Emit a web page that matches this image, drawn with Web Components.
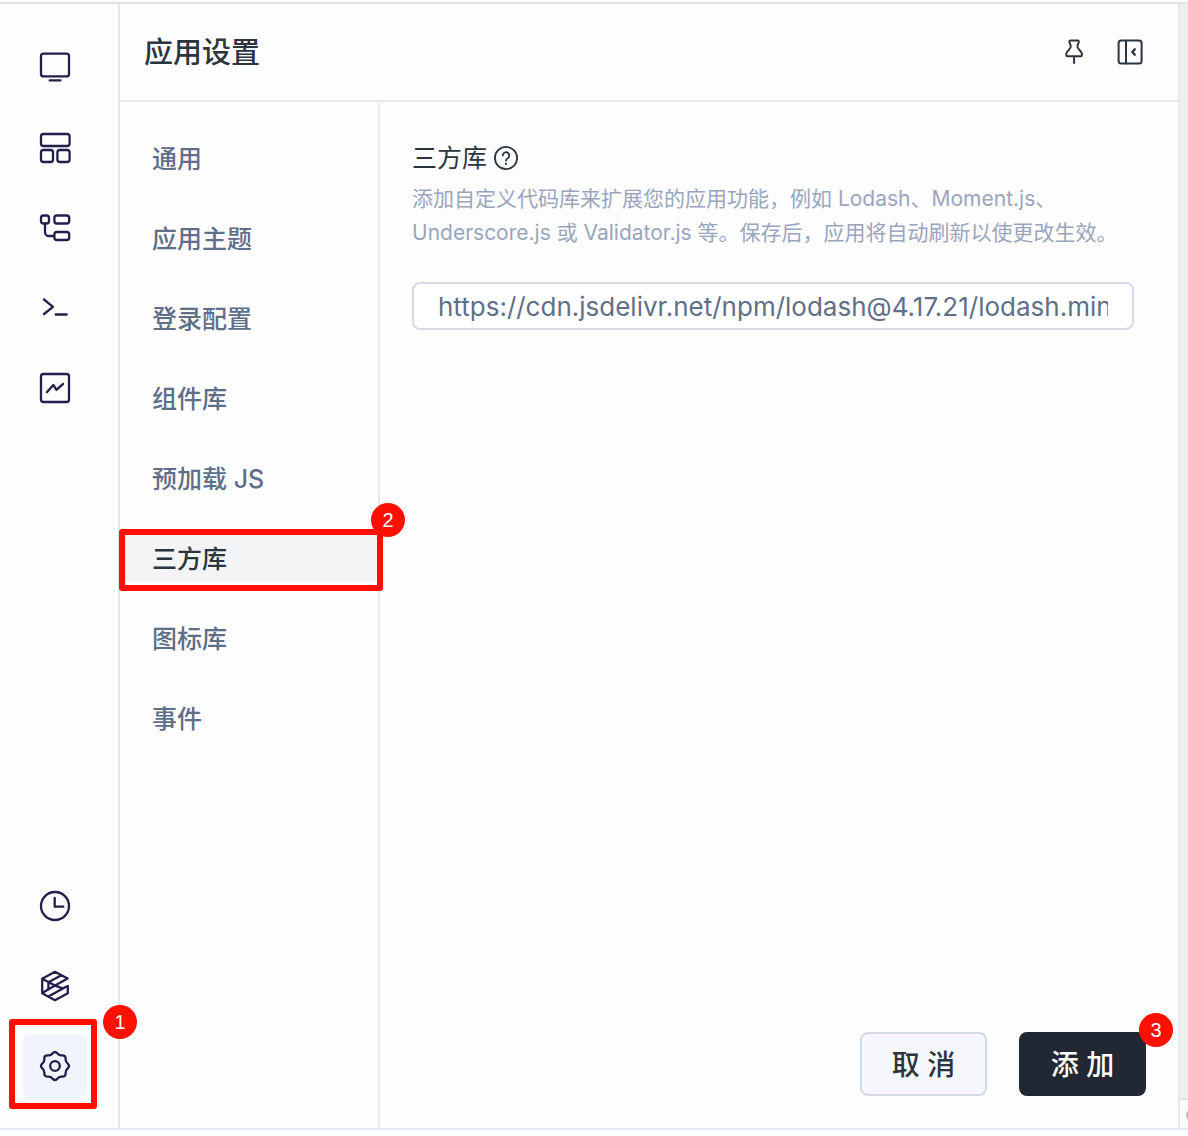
<!DOCTYPE html>
<html lang="zh-CN">
<head>
<meta charset="utf-8">
<title>应用设置</title>
<style>
  body {
    margin: 0;
    background: #fdfdfe;
    color: #2c3440;
    font-family: Inter, "Noto Sans CJK SC", sans-serif;
  }
</style>
</head>
<body>
<app-shell>
  <side-rail slot="rail">
    <rail-button icon="monitor" label="预览"></rail-button>
    <rail-button icon="layout" label="布局"></rail-button>
    <rail-button icon="tree" label="组件树"></rail-button>
    <rail-button icon="terminal" label="控制台"></rail-button>
    <rail-button icon="chart" label="性能"></rail-button>
    <rail-button slot="end" icon="clock" label="历史"></rail-button>
    <rail-button slot="end" icon="cube" label="模块"></rail-button>
    <rail-button slot="end" icon="gear" label="设置" active>
      <step-frame></step-frame>
      <step-badge>1</step-badge>
    </rail-button>
  </side-rail>
  <settings-panel heading="应用设置">
    <settings-menu slot="menu">
      <menu-item>通用</menu-item>
      <menu-item>应用主题</menu-item>
      <menu-item>登录配置</menu-item>
      <menu-item>组件库</menu-item>
      <menu-item>预加载 JS</menu-item>
      <menu-item active>三方库<step-frame slot="mark"></step-frame><step-badge slot="mark">2</step-badge></menu-item>
      <menu-item>图标库</menu-item>
      <menu-item>事件</menu-item>
    </settings-menu>
    <library-form label="三方库" value="https://cdn.jsdelivr.net/npm/lodash@4.17.21/lodash.min.js">
      添加自定义代码库来扩展您的应用功能，例如 Lodash、Moment.js、Underscore.js 或 Validator.js 等。保存后，应用将自动刷新以使更改生效。
      <action-button slot="actions">取 消</action-button>
      <action-button slot="actions" primary>添 加<step-badge slot="mark">3</step-badge></action-button>
    </library-form>
  </settings-panel>
</app-shell>

<script>
// Stroke icons, all on a 32px grid
const ICONS = {
  monitor: `<rect x="2" y="1.6" width="28" height="22.8" rx="2.5"/><path d="M10.7 28.4h10.8"/>`,
  layout: `<rect x="2" y="2" width="28.6" height="12" rx="2.5"/><rect x="2" y="18" width="12" height="12" rx="2.5"/><rect x="18.4" y="18" width="12.2" height="12" rx="2.5"/>`,
  tree: `<rect x="2" y="3.5" width="8" height="8" rx="2.5"/><rect x="15.4" y="3.5" width="14.8" height="8" rx="2.5"/><rect x="15.4" y="20" width="14.8" height="8" rx="2.5"/><path d="M6 11.5v8.5a4 4 0 0 0 4 4h5"/>`,
  terminal: `<path d="M5 7.5l9 7.3L5 22M16.7 22.5h11"/>`,
  chart: `<rect x="2" y="2" width="28" height="28" rx="2.5"/><path d="M7.9 20.2l6.4-7.2 3.2 4.9 6.6-6"/>`,
  clock: `<circle cx="16" cy="16" r="14"/><path d="M15.7 8v8.7h8.6"/>`,
  cube: `<path d="M28.6 8.4L16 1.8 3.2 8.8v14.4L16 30.2l12.8-7V16L24 18.4 9.4 26.6M28.6 8.4L16 15.4 3.2 8.8M22.4 5.2L9.4 12.2v7.4L16 15.4M3.2 23L16 15.6l7.6 2.8"/>`,
  gear: `<path d="M18.2 3.1Q20 5.7 23 5.3 26.7 5 26.7 9 26.3 12 28.9 13.8 31.1 16 28.9 18.2 26.3 20 26.7 23 26.7 27 23 26.7 20 26.3 18.2 28.9 16 31.1 13.8 28.9 12 26.3 9 26.7 5 26.7 5.3 23 5.7 20 3.1 18.2.9 16 3.1 13.8 5.7 12 5.3 9 5 5 9 5.3 12 5.7 13.8 3.1 16 .9 18.2 3.1z"/><circle cx="16" cy="16" r="4.8"/>`,
  pin: `<path d="M12.7 4.6h6.8q1.6 0 1.3 1.4l-1.2 3.4q-.4 1.4.4 2.6l3.2 4.2q.8 1.2.8 2.6 0 1.5-1.4 1.5H9.6q-1.4 0-1.4-1.5 0-1.4.8-2.6l3.2-4.2q.8-1.2.4-2.6L11.4 6q-.3-1.4 1.3-1.4zM16.1 20.5V27"/>`,
  collapse: `<rect x="4.6" y="4.6" width="23" height="23" rx="2.5"/><path d="M12 5v22.5"/><path d="M20.8 13.3L18.3 16l2.5 2.7" stroke-width="2.4"/>`,
  help: `<circle cx="16" cy="16" r="14.8"/><path d="M11.7 12.6a4.3 4.3 0 1 1 6.5 3.7Q16 17.5 16 19.6"/><path d="M16 23.6v.4" stroke-width="2.8"/>`,
};

function define(name, css, html, setup) {
  customElements.define(name, class extends HTMLElement {
    constructor() {
      super();
      this.attachShadow({ mode: "open" });
    }
    connectedCallback() {
      this.shadowRoot.innerHTML = `<style>${css}</style>${typeof html === "function" ? html(this) : html}`;
      if (setup) setup(this);
    }
  });
}

define("ui-icon", `
  :host { display: block; width: 32px; height: 32px; }
  svg { display: block; width: 100%; height: 100%; fill: none; stroke: currentColor; stroke-width: var(--icon-stroke, 2); stroke-linecap: round; stroke-linejoin: round; }
`, el => `<svg viewBox="0 0 32 32" aria-hidden="true">${ICONS[el.getAttribute("name")]}</svg>`);

// Red outline and number that sit on top of a control
define("step-frame", `
  :host { position: absolute; inset: var(--frame-inset); border: 6px solid #ff1000; border-radius: 3px; pointer-events: none; }
`, ``);

define("step-badge", `
  :host {
    position: absolute; top: var(--badge-top); right: var(--badge-right);
    display: grid; place-items: center; width: 34px; height: 34px; border-radius: 50%;
    background: #ff1000; color: #fff; font: 400 20px/34px "Liberation Sans", sans-serif; pointer-events: none;
  }
`, `<slot></slot>`);

define("app-shell", `
  :host { display: flex; flex-direction: column; box-sizing: border-box; min-height: 100vh; padding: 2px 0 6px; }
  main { flex: 1; display: grid; grid-template-columns: auto minmax(0, 1fr) 8px; border-top: 2px solid #e2e2e3; border-bottom: 2px solid #e4e8f0; }
  aside { display: flex; flex-direction: column; background: #eeeeee; }
  .corner { box-sizing: border-box; height: 30px; margin-top: auto; border-top: 2px solid #e3e3e3; background: #fafafa; overflow: hidden; padding: 9px 0 0 6px; }
  .corner::before { content: ""; display: block; width: 12px; height: 12px; border-radius: 50%; background: #b9b9b9; }
`, `<main><slot name="rail"></slot><slot></slot><aside><div class="corner"></div></aside></main>`);

define("side-rail", `
  :host { display: block; border-right: 2px solid #e4e6ec; color: #231f4b; --icon-stroke: 2.3; }
  nav { box-sizing: border-box; height: 100%; display: flex; flex-direction: column; justify-content: space-between; padding: 32px 31px 30px 23px; }
  div { display: grid; gap: 16px; }
`, `<nav><div><slot></slot></div><div><slot name="end"></slot></div></nav>`);

define("rail-button", `
  :host { display: block; position: relative; --frame-inset: -15px -10px -11px -14px; --badge-top: -29px; --badge-right: -50px; }
  button { display: grid; place-items: center; width: 64px; height: 64px; padding: 0; border: 0; border-radius: 8px; background: none; color: inherit; cursor: pointer; }
  :host([active]) button { background: #f1f4fd; }
`, el => `<button type="button" aria-label="${el.getAttribute("label")}"><ui-icon name="${el.getAttribute("icon")}"></ui-icon></button><slot></slot>`);

define("settings-panel", `
  :host { display: flex; flex-direction: column; border-right: 2px solid #e4e8f2; }
  header { display: flex; align-items: center; gap: 24px; height: 96px; padding: 0 32px 0 24px; border-bottom: 2px solid #e4e8f2; }
  h1 { flex: 1; margin: 0; padding-top: 2px; font-size: 29px; line-height: 40px; font-weight: 500; }
  header button { padding: 0; border: 0; background: none; color: inherit; cursor: pointer; }
  .body { flex: 1; display: grid; grid-template-columns: 260px minmax(0, 1fr); }
`, el => `
  <header>
    <h1>${el.getAttribute("heading")}</h1>
    <button type="button" aria-label="固定"><ui-icon name="pin"></ui-icon></button>
    <button type="button" aria-label="收起"><ui-icon name="collapse"></ui-icon></button>
  </header>
  <div class="body"><slot name="menu"></slot><slot></slot></div>
`);

define("settings-menu", `
  :host { display: block; border-right: 2px solid #e4e8f2; }
  nav { display: grid; gap: 32px; padding: 32px 0; }
`, `<nav><slot></slot></nav>`);

define("menu-item", `
  :host { display: block; position: relative; --frame-inset: -5px -5px -9px -1px; --badge-top: -31px; --badge-right: -27px; }
  button { box-sizing: border-box; display: block; width: 100%; height: 48px; padding: 2px 32px 0; border: 0; background: none; color: #5f6e89; font: inherit; font-size: 25px; line-height: 46px; font-weight: 500; text-align: left; cursor: pointer; }
  :host([active]) button { background: #f3f4f6; color: #2c3440; }
`, `<button type="button"><slot></slot></button><slot name="mark"></slot>`);

define("library-form", `
  :host { display: block; }
  form { box-sizing: border-box; height: 100%; display: flex; flex-direction: column; padding: 32px; }
  .field { padding-right: 12px; }
  .label { display: flex; align-items: center; gap: 7px; height: 48px; }
  label { font-size: 25px; line-height: 48px; }
  ui-icon { width: 24px; height: 24px; --icon-stroke: 2.4; }
  p { margin: 0 0 32px; color: #9aa5bd; font-size: 21px; line-height: 34px; }
  input { box-sizing: border-box; display: block; width: 100%; height: 48px; padding: 0 24px; border: 2px solid #d5d9e8; border-radius: 8px; background: #fff; color: #5f6e89; font: inherit; font-size: 26px; outline: 0; }
  footer { display: flex; justify-content: flex-end; gap: 32px; margin-top: auto; }
`, el => `
  <form>
    <div class="field">
      <div class="label"><label for="url">${el.getAttribute("label")}</label><ui-icon name="help"></ui-icon></div>
      <p><slot></slot></p>
      <input id="url" type="text" value="${el.getAttribute("value")}">
    </div>
    <footer><slot name="actions"></slot></footer>
  </form>
`, el => {
  el.shadowRoot.querySelector("form").addEventListener("submit", e => e.preventDefault());
});

define("action-button", `
  :host { display: block; position: relative; --badge-top: -19px; --badge-right: -27px; }
  button { box-sizing: border-box; width: 127px; height: 64px; padding: 2px 0 0; border: 2px solid #d3dae7; border-radius: 8px; background: #f5f7fd; color: #2c3440; font: inherit; font-size: 28px; line-height: 58px; font-weight: 500; cursor: pointer; }
  :host([primary]) button { border-color: #222833; background: #222833; color: #fff; }
`, `<button type="button"><slot></slot></button><slot name="mark"></slot>`);
</script>
</body>
</html>
